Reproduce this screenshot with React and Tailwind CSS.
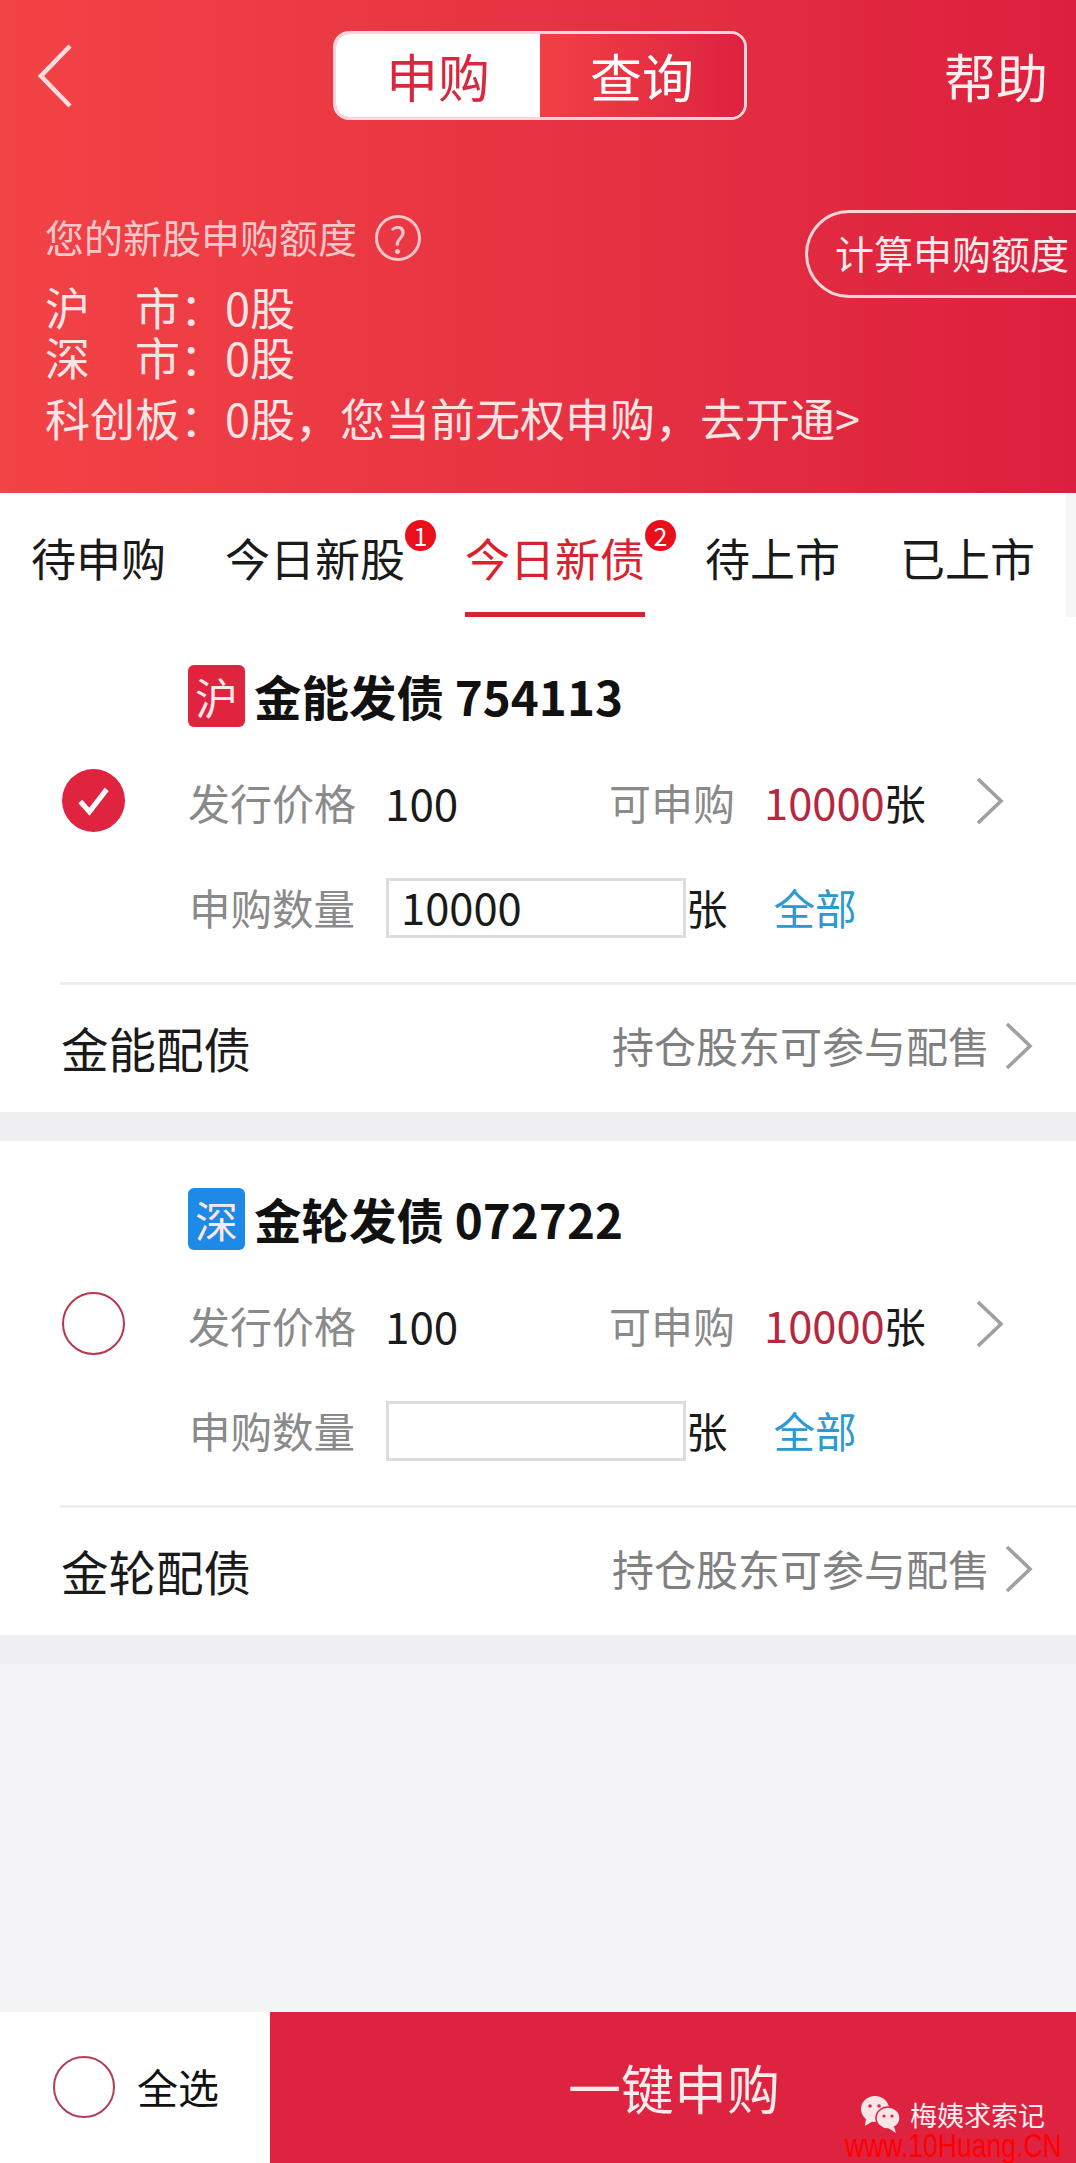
const FONT = "font-['Noto_Sans_CJK_SC','Noto_Sans',sans-serif]";

function Chevron({ className }) {
  return (
    <svg className={className} viewBox="0 0 28 48" fill="none">
      <path d="M2 2 L25 24 L2 46" stroke="currentColor" strokeWidth="3.6" />
    </svg>
  );
}

function Tab({ label, active, badge, className = "" }) {
  return (
    <div
      className={`relative h-[124px] shrink-0 pt-[37px] text-[45px] leading-[56px] whitespace-nowrap ${
        active ? "border-b-[5px] border-[#d8232f] text-[#d8232f]" : "text-[#1a1a1a]"
      } ${className}`}
    >
      {label}
      {badge && (
        <span className="absolute left-[180px] top-[27px] flex h-[31px] w-[31px] items-center justify-center rounded-full bg-[#e9101c] text-[25px] leading-none text-white">
          {badge}
        </span>
      )}
    </div>
  );
}

function Card({ market, marketClass, title, checked, qty, placement }) {
  return (
    <section className="bg-white pt-[47px]">
      <div className="flex h-[62px] items-center pl-[188px]">
        <span
          className={`flex h-[62px] w-[57px] items-center justify-center rounded-[6px] text-[43px] leading-none text-[#fde8ea] ${marketClass}`}
        >
          {market}
        </span>
        <h2 className="ml-[9px] text-[47.5px] leading-[62px] font-bold whitespace-nowrap text-[#111]">
          {title}
        </h2>
      </div>
      <div className="mt-[43px] flex h-[70px] items-center text-[42px] leading-[64px]">
        <div className="flex w-[188px] shrink-0 justify-start pb-[10px] pl-[62px]">
          {checked ? (
            <svg className="h-[63px] w-[63px]" viewBox="0 0 62 62">
              <circle cx="31" cy="31" r="31" fill="#e0243f" />
              <path d="M18 32 L27 42 L44 20" fill="none" stroke="#fff" strokeWidth="5" />
            </svg>
          ) : (
            <span className="h-[63px] w-[63px] rounded-full border-2 border-[#b5384f]" />
          )}
        </div>
        <span className="mb-[6px] text-[#8a8a8a]">发行价格</span>
        <span className="mb-[6px] ml-[29px] w-[224px] text-[44px] text-[#1a1a1a]">100</span>
        <span className="mb-[6px] text-[#8a8a8a]">可申购</span>
        <span className="mb-[6px] ml-[29px] text-[43.5px] text-[#b5283f]">10000</span>
        <span className="mb-[6px] -ml-[1px] text-[#1a1a1a]">张</span>
        <Chevron className="mb-[8px] ml-[50px] h-[48px] w-[28px] text-[#a0a0a0]" />
      </div>
      <div className="mt-[38px] flex h-[60px] items-center pl-[189px] text-[41.5px] leading-[56px]">
        <span className="mb-[2px] text-[#8a8a8a]">申购数量</span>
        <div className="ml-[31px] h-[60px] w-[300px] border-[3px] border-[#dcdcdc] pl-[12px] text-[43.5px] leading-[52px] text-[#1a1a1a]">
          {qty}
        </div>
        <span className="mb-[2px] text-[#1a1a1a]">张</span>
        <span className="mb-[2px] ml-[46px] text-[#2a9ad0]">全部</span>
      </div>
      <div className="mt-[44px] ml-[60px] h-[3px] bg-[#eeeeee]" />
      <div className="flex h-[127px] items-center pr-[43px] pl-[61px]">
        <span className="mb-[2px] text-[47.5px] leading-[60px] text-[#1a1a1a]">{placement}</span>
        <span className="mb-[8px] ml-auto text-[42px] leading-[60px] text-[#808080]">
          持仓股东可参与配售
        </span>
        <Chevron className="mb-[6px] ml-[15px] h-[50px] w-[28px] text-[#a0a0a0]" />
      </div>
    </section>
  );
}

export default function App() {
  return (
    <div className={`relative flex h-[2163px] w-[1076px] flex-col overflow-hidden bg-[#f4f3f5] ${FONT}`}>
      <header className="h-[493px] shrink-0 bg-gradient-to-r from-[#f24346] to-[#dc1f3e] pt-[31px] text-white">
        <div className="flex h-[89px] items-center pl-[38px]">
          <svg className="h-[64px] w-[34px]" viewBox="0 0 34 64" fill="none">
            <path d="M32 2 L3 32 L32 62" stroke="#fbdcdc" strokeWidth="4.5" />
          </svg>
          <div className="ml-[261px] flex h-[89px] w-[414px] overflow-hidden rounded-[16px] border-[3px] border-[#fbd5d9] text-[52px] leading-none">
            <div className="flex w-[204px] items-center justify-center bg-white text-[#d8283f]">申购</div>
            <div className="flex flex-1 items-center justify-center bg-gradient-to-r from-[#f04045] to-[#de2140]">查询</div>
          </div>
          <span className="ml-[197px] text-[52px] leading-none whitespace-nowrap text-[#fdeeee]">帮助</span>
        </div>
        <div className="mt-[90px] flex items-start">
          <div className="w-[805px] shrink-0 pl-[45px]">
            <div className="flex h-[56px] items-center text-[39px] leading-[52px] text-[#f7c6c8]">
              <span className="mb-[4px]">您的新股申购额度</span>
              <span className="ml-[18px] flex h-[46px] w-[46px] items-center justify-center rounded-full border-[3px] border-[#f7c6c8] text-[36px] leading-none">
                ?
              </span>
            </div>
            <div className="mt-[16px] text-[45px] leading-[50px] whitespace-nowrap text-[#fde4e4]">沪　市：0股</div>
            <div className="text-[45px] leading-[50px] whitespace-nowrap text-[#fde4e4]">深　市：0股</div>
            <div className="mt-[11px] text-[45px] leading-[50px] whitespace-nowrap text-[#fde4e4]">
              科创板：0股，您当前无权申购，去开通&gt;
            </div>
          </div>
          <div className="flex h-[88px] w-[271px] shrink-0 items-center rounded-l-[44px] border-[3px] border-r-0 border-[#fbd5d9] pb-[4px] pl-[27px] text-[39px] leading-none whitespace-nowrap text-[#fdeaea]">
            计算申购额度
          </div>
        </div>
      </header>

      <nav className="flex h-[125px] shrink-0 items-start bg-white pl-[31px]">
        <Tab label="待申购" />
        <Tab label="今日新股" badge="1" className="ml-[59px]" />
        <Tab label="今日新债" badge="2" active className="ml-[60px]" />
        <Tab label="待上市" className="ml-[60px]" />
        <Tab label="已上市" className="ml-[60px]" />
        <div className="ml-auto h-[124px] w-[10px] bg-[#f6f6f6]" />
      </nav>

      <Card market="沪" marketClass="bg-[#e0243f]" title="金能发债 754113" checked qty="10000" placement="金能配债" />
      <div className="h-[29px] shrink-0 bg-[#efeef0]" />
      <Card market="深" marketClass="bg-[#1c8ae6]" title="金轮发债 072722" placement="金轮配债" />
      <div className="h-[29px] shrink-0 bg-[#efeef0]" />
      <div className="flex-1" />

      <footer className="flex h-[151px] shrink-0">
        <div className="flex w-[270px] items-center bg-white pb-[2px] pl-[53px]">
          <span className="h-[62px] w-[62px] rounded-full border-2 border-[#b04058]" />
          <span className="ml-[22px] text-[41px] leading-none text-[#111]">全选</span>
        </div>
        <div className="flex flex-1 items-center bg-[#de2340] pl-[298px] text-[53px] leading-none text-[#fdeaea]">
          一键申购
        </div>
      </footer>

      <div className="absolute top-[2095px] left-[860px] flex items-center">
        <svg className="h-[38px] w-[42px]" viewBox="0 0 42 38">
          <ellipse cx="15" cy="14" rx="14" ry="13" fill="#fde4e6" />
          <path d="M6 24 L5 31 L13 26 Z" fill="#fde4e6" />
          <ellipse cx="28" cy="23" rx="12" ry="11" fill="#fde4e6" stroke="#de2340" strokeWidth="1.5" />
          <path d="M34 32 L36 38 L28 33 Z" fill="#fde4e6" />
          <circle cx="10" cy="11" r="1.8" fill="#c8324a" />
          <circle cx="19" cy="11" r="1.8" fill="#c8324a" />
          <circle cx="24" cy="21" r="1.6" fill="#c8324a" />
          <circle cx="32" cy="21" r="1.6" fill="#c8324a" />
        </svg>
        <span className="ml-[8px] text-[27px] leading-none whitespace-nowrap text-[#fdeef0]">梅姨求索记</span>
      </div>
      <div className="absolute top-[2126px] left-[845px] origin-left scale-x-[0.78] font-['Liberation_Sans',sans-serif] text-[34px] leading-[38px] whitespace-nowrap text-[#ff0000]">
        www.10Huang.CN
      </div>
    </div>
  );
}
